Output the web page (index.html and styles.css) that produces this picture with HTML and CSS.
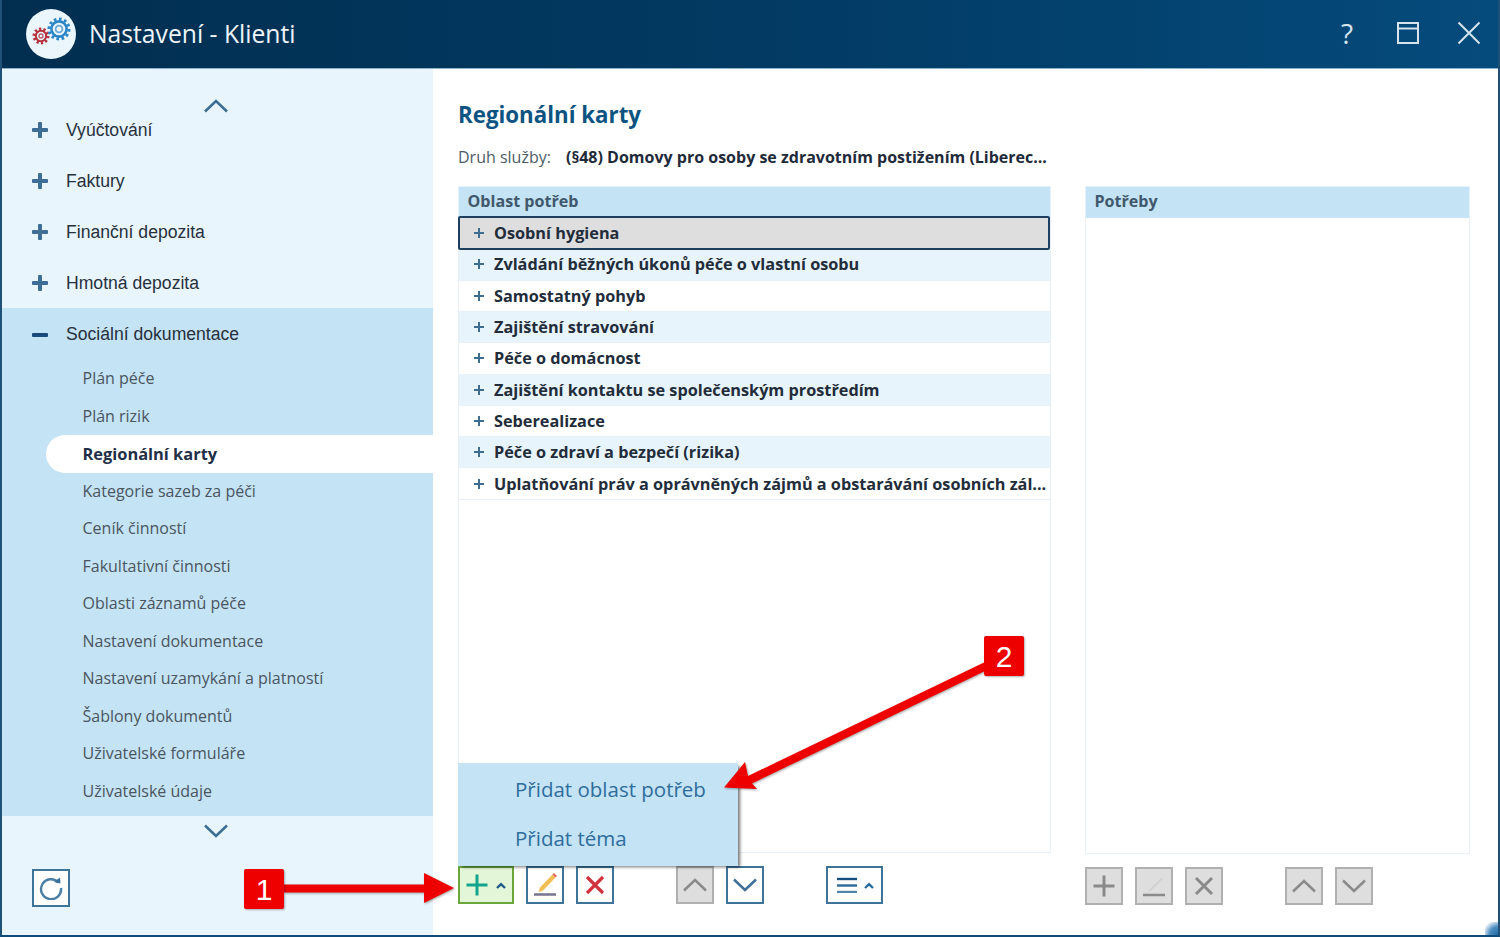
FILE: index.html
```html
<!DOCTYPE html>
<html lang="cs">
<head>
<meta charset="utf-8">
<title>Nastavení - Klienti</title>
<link rel="stylesheet" href="styles.css">
</head>
<body>
<div class="window">
  <header class="titlebar">
    <div class="logo">
      <svg width="50" height="50" viewBox="0 0 50 50">
        <g fill="none" stroke="#b5323f">
          <circle cx="15" cy="27" r="7" stroke-width="3" stroke-dasharray="2.2 2.2"/>
          <circle cx="15" cy="27" r="5.2" stroke-width="2"/>
          <circle cx="15" cy="27" r="2" stroke-width="1.4" stroke="#c0606c"/>
        </g>
        <g fill="none" stroke="#2a86c8">
          <circle cx="33" cy="20" r="10" stroke-width="3" stroke-dasharray="2.6 2.6"/>
          <circle cx="33" cy="20" r="7.6" stroke-width="2.6"/>
          <circle cx="33" cy="20" r="3.4" stroke-width="1.8" stroke="#6aa9d8"/>
        </g>
      </svg>
    </div>
    <h1 class="app-title">Nastavení - Klienti</h1>
    <div class="win-controls">
      <span class="win-help">?</span>
      <svg class="win-ico" width="24" height="24" viewBox="0 0 24 24" fill="none" stroke="#d5e4ee" stroke-width="2"><rect x="2" y="2" width="20" height="20"/><path d="M2 7.5h20"/></svg>
      <svg class="win-ico" width="24" height="24" viewBox="0 0 24 24" fill="none" stroke="#d5e4ee" stroke-width="2"><path d="M1.500 1.500l21 21M22.500 1.500l-21 21"/></svg>
    </div>
  </header>
  <div class="content">
    <aside class="sidebar">
      <div class="scroll-up">
        <svg width="26" height="14" viewBox="0 0 26 14" fill="none" stroke="#3e6d96" stroke-width="2.6"><path d="M2 12.5L13 2l11 10.5"/></svg>
      </div>
      <nav class="nav">
        <div class="nav-item"><span class="sign plus"></span>Vyúčtování</div>
        <div class="nav-item"><span class="sign plus"></span>Faktury</div>
        <div class="nav-item"><span class="sign plus"></span>Finanční depozita</div>
        <div class="nav-item"><span class="sign plus"></span>Hmotná depozita</div>
        <div class="nav-section">
          <div class="nav-item"><span class="sign minus"></span>Sociální dokumentace</div>
          <ul class="sub">
            <li>Plán péče</li>
            <li>Plán rizik</li>
            <li class="active">Regionální karty</li>
            <li>Kategorie sazeb za péči</li>
            <li>Ceník činností</li>
            <li>Fakultativní činnosti</li>
            <li>Oblasti záznamů péče</li>
            <li>Nastavení dokumentace</li>
            <li>Nastavení uzamykání a platností</li>
            <li>Šablony dokumentů</li>
            <li>Uživatelské formuláře</li>
            <li>Uživatelské údaje</li>
          </ul>
        </div>
      </nav>
      <div class="scroll-down">
        <svg width="26" height="14" viewBox="0 0 26 14" fill="none" stroke="#3e6d96" stroke-width="2.6"><path d="M2 1.5L13 12 24 1.5"/></svg>
      </div>
      <div class="side-foot">
        <button class="btn">
          <svg width="24" height="24" viewBox="0 0 24 24" fill="none" stroke="#4a7fa6" stroke-width="2.400"><path d="M19.500 6.500A10 10 0 1 0 22 12"/><path d="M15 6l6.500 1.500L21 1.500z" fill="#3a6f98" stroke="none"/></svg>
        </button>
      </div>
    </aside>
    <main class="main">
      <h2 class="page-title">Regionální karty</h2>
      <div class="service"><span class="service-label">Druh služby:</span><strong>(§48) Domovy pro osoby se zdravotním postižením (Liberec...</strong></div>
      <div class="columns">
        <section class="col col-left">
          <div class="panel">
            <div class="panel-head">Oblast potřeb</div>
            <div class="row selected"><span class="row-plus"></span><span class="row-text">Osobní hygiena</span></div>
            <div class="row"><span class="row-plus"></span><span class="row-text">Zvládání běžných úkonů péče o vlastní osobu</span></div>
            <div class="row"><span class="row-plus"></span><span class="row-text">Samostatný pohyb</span></div>
            <div class="row"><span class="row-plus"></span><span class="row-text">Zajištění stravování</span></div>
            <div class="row"><span class="row-plus"></span><span class="row-text">Péče o domácnost</span></div>
            <div class="row"><span class="row-plus"></span><span class="row-text">Zajištění kontaktu se společenským prostředím</span></div>
            <div class="row"><span class="row-plus"></span><span class="row-text">Seberealizace</span></div>
            <div class="row"><span class="row-plus"></span><span class="row-text">Péče o zdraví a bezpečí (rizika)</span></div>
            <div class="row"><span class="row-plus"></span><span class="row-text">Uplatňování práv a oprávněných zájmů a obstarávání osobních zál...</span></div>
          </div>
          <div class="toolbar">
            <div class="menu">
              <div class="menu-item">Přidat oblast potřeb</div>
              <div class="menu-item">Přidat téma</div>
            </div>
            <button class="btn btn-add">
              <svg width="22" height="22" viewBox="0 0 22 22" fill="none" stroke="#10a58c" stroke-width="3"><path d="M11 .5v21M.5 11h21"/></svg>
              <svg class="caret" width="10" height="7" viewBox="0 0 10 7" fill="none" stroke="#1f5a88" stroke-width="2.400"><path d="M1 6l4-3.800L9 6"/></svg>
            </button>
            <button class="btn">
              <svg width="28" height="28" viewBox="0 0 28 28" fill="none"><path d="M7.500 21l1.500-4.500L21.500 3.500l3 3L12 19.500z" fill="#f2bd52"/><path d="M21.500 3.500L23 2l3 3-1.500 1.500z" fill="#e2625c"/><path d="M3 23.500h22" stroke="#77748f" stroke-width="2.500"/></svg>
            </button>
            <button class="btn">
              <svg width="22" height="22" viewBox="0 0 22 22" fill="none" stroke="#d2343f" stroke-width="3.200"><path d="M3 3l16 16M19 3L3 19"/></svg>
            </button>
            <button class="btn btn-off gap-move">
              <svg width="26" height="14" viewBox="0 0 26 14" fill="none" stroke="#8a8a8a" stroke-width="2.500"><path d="M2 12.500L13 2l11 10.500"/></svg>
            </button>
            <button class="btn">
              <svg width="26" height="14" viewBox="0 0 26 14" fill="none" stroke="#3d6f99" stroke-width="2.500"><path d="M2 1.500L13 12 24 1.500"/></svg>
            </button>
            <button class="btn btn-wide gap-move">
              <svg width="22" height="16" viewBox="0 0 22 16" fill="none" stroke="#2a6a9a" stroke-width="2.400"><path d="M1 2h20" stroke="#154f80"/><path d="M1 8.500h20"/><path d="M1 15h20" stroke="#4f83ab"/></svg>
              <svg class="caret" width="10" height="7" viewBox="0 0 10 7" fill="none" stroke="#2a6a9a" stroke-width="2.400"><path d="M1 6l4-3.800L9 6"/></svg>
            </button>
          </div>
        </section>
        <section class="col col-right">
          <div class="panel">
            <div class="panel-head">Potřeby</div>
          </div>
          <div class="toolbar">
            <button class="btn btn-off">
              <svg width="24" height="24" viewBox="0 0 24 24" fill="none" stroke="#8a8a8a" stroke-width="3"><path d="M12 1.500v21M1.500 12h21"/></svg>
            </button>
            <button class="btn btn-off">
              <svg width="26" height="26" viewBox="0 0 26 26" fill="none"><path d="M7.500 17.500L20.500 5l1 1L9 18.500z" fill="#cfcfcf"/><path d="M2 22h22" stroke="#8a8a8a" stroke-width="2.500"/></svg>
            </button>
            <button class="btn btn-off">
              <svg width="22" height="22" viewBox="0 0 22 22" fill="none" stroke="#8a8a8a" stroke-width="3"><path d="M3 3l16 16M19 3L3 19"/></svg>
            </button>
            <button class="btn btn-off gap-move">
              <svg width="26" height="14" viewBox="0 0 26 14" fill="none" stroke="#8a8a8a" stroke-width="2.500"><path d="M2 12.500L13 2l11 10.500"/></svg>
            </button>
            <button class="btn btn-off">
              <svg width="26" height="14" viewBox="0 0 26 14" fill="none" stroke="#8a8a8a" stroke-width="2.500"><path d="M2 1.500L13 12 24 1.500"/></svg>
            </button>
          </div>
        </section>
      </div>
    </main>
  </div>
  <div class="corner"></div>
  <svg class="arrows" width="1500" height="937" viewBox="0 0 1500 937">
    <g class="arrow-shapes" fill="#ee0000">
      <path d="M284 884.500H424V873L454 888 424 903V892.500H284z"/>
      <path d="M985 662L748 776 745 762 724 787.500 757 789 752 783.500 985 671z"/>
    </g>
  </svg>
  <div class="badge badge-1">1</div>
  <div class="badge badge-2">2</div>
</div>
</body>
</html>
```

FILE: styles.css
```css
* { box-sizing: border-box; }
html, body { margin: 0; padding: 0; }
body { font-family: "Open Sans", "Liberation Sans", sans-serif; color: #222c3a; background: #fff; }

.window {
  position: relative;
  width: 1500px;
  height: 937px;
  display: flex;
  flex-direction: column;
  overflow: hidden;
  border-left: 2px solid #1f5078;
  border-right: 2px solid #1f5078;
  border-bottom: 2px solid #0f4a78;
  background: #fff;
}

.titlebar {
  height: 69px;
  margin: 0 -2px;
  flex: none;
  display: flex;
  align-items: center;
  padding: 0 19.500px 1px 26px;
  background: linear-gradient(90deg, #012e4f 0%, #023a63 50%, #054b7c 100%);
  border-bottom: 1px solid #8db2ca;
}
.logo {
  width: 50px;
  height: 50px;
  border-radius: 50%;
  background: #eaf5fc;
  flex: none;
}
.logo svg { display: block; }
.app-title {
  margin: 0 0 0 13px;
  font-size: 24.700px;
  font-weight: 400;
  line-height: 32px;
  color: #eef5fa;
}
.win-controls {
  margin-left: auto;
  margin-bottom: 2px;
  display: flex;
  align-items: center;
  gap: 37px;
}
.win-help { font-size: 28px; line-height: 32px; color: #d5e4ee; width: 16px; margin-right: 3.500px; text-align: center; }
.win-ico { display: block; }

.content { flex: 1; min-height: 0; display: flex; }

.sidebar {
  width: 431px;
  flex: none;
  background: #e9f5fc;
  display: flex;
  flex-direction: column;
}
.scroll-up { height: 35px; padding-right: 3px; }
.scroll-up svg { display: block; margin: 30px auto 0; }
.nav { font-family: "Liberation Sans", Arial, sans-serif; }
.nav-item {
  height: 51px;
  display: flex;
  align-items: center;
  padding: 1px 0 0 30px;
  font-size: 17.600px;
  color: #27303c;
}
.nav-section .nav-item { height: 52px; }
.sign { position: relative; width: 16px; height: 16px; margin-right: 18px; flex: none; }
.sign::before, .plus::after {
  content: "";
  position: absolute;
  background: #3e6d96;
}
.sign::before { left: 0; right: 0; top: 6px; height: 4px; border-radius: 1px; }
.plus::after { top: 0; bottom: 0; left: 6px; width: 4px; border-radius: 1px; }
.minus::before { background: #1a4a7a; }
.nav-section { background: #c4e3f5; padding-bottom: 6px; }
.sub {
  list-style: none;
  margin: 0;
  padding: 0 0 0 44px;
  font-family: "Open Sans", sans-serif;
  font-size: 16px;
  color: #4a5560;
}
.sub li {
  height: 37.500px;
  line-height: 37.500px;
  padding-left: 36.500px;
  border-radius: 19px 0 0 19px;
}
.sub .active { background: #fff; font-size: 16.400px; font-weight: 700; color: #1f2f47; }
.scroll-down { height: 53px; padding-right: 3px; }
.scroll-down svg { display: block; margin: 8px auto 0; }
.side-foot { padding-left: 30px; }

.btn {
  width: 38px;
  height: 38px;
  flex: none;
  padding: 0;
  display: flex;
  align-items: center;
  justify-content: center;
  background: #fff;
  border: 2px solid #3f7499;
}
.btn-add { width: 56px; background: #e4f6d8; border-color: #6aa63c; gap: 8px; padding-right: 1px; }
.btn-wide { width: 57px; gap: 6px; }
.btn-off { background: #dedede; border-color: #b0b0b0; }
.caret { flex: none; }

.main { flex: 1; min-width: 0; padding: 28px 28px 0 25px; display: flex; flex-direction: column; }
.page-title {
  margin: 0;
  font-size: 22.300px;
  line-height: 36px;
  font-weight: 700;
  color: #0e5482;
}
.service {
  margin-top: 12px;
  height: 24px;
  line-height: 24px;
  font-size: 16px;
  display: flex;
  white-space: nowrap;
}
.service-label { color: #4d5b68; width: 108px; flex: none; }
.service strong { font-weight: 700; color: #1f2a3a; }

.columns { margin-top: 17px; display: flex; gap: 34px; }
.col { display: flex; flex-direction: column; }
.col-left { width: 593px; }
.col-right { width: 385px; }
.panel { border: 1px solid #e8f0fa; height: 667px; }
.col-right .panel { height: 668px; }
.panel-head {
  height: 31px;
  line-height: 29px;
  padding-left: 8.500px;
  margin: 0;
  background: #c4e3f5;
  font-size: 16.100px;
  font-weight: 700;
  color: #41586c;
}
.row {
  height: 31.300px;
  display: flex;
  align-items: center;
  padding: 0 3px 0 15px;
  font-size: 16.250px;
  font-weight: 700;
  color: #222c3a;
  border-bottom: 1px solid #e8f0fa;
}
.row:nth-child(odd) { background: #e8f4fb; }
.row.selected {
  height: 34px;
  margin: -2px 0 -.700px -1px;
  padding-left: 14px;
  position: relative;
  background: #dedede;
  border: 2px solid #1f3f5f;
  border-radius: 2px;
}
.row-plus { position: relative; width: 10px; height: 10px; margin-right: 10px; flex: none; }
.row-plus::before, .row-plus::after { content: ""; position: absolute; background: #3f6d90; }
.row-plus::before { left: 0; right: 0; top: 4px; height: 2px; }
.row-plus::after { top: 0; bottom: 0; left: 4px; width: 2px; }
.row-text { white-space: nowrap; overflow: hidden; }

.toolbar { position: relative; margin-top: 13px; display: flex; gap: 12px; }
.gap-move { margin-left: 50px; }
.menu {
  position: absolute;
  left: 0;
  bottom: 100%;
  width: 280px;
  height: 103px;
  padding-top: 2px;
  background: #c4e3f5;
  box-shadow: 3px 2px 3px -1px rgba(0, 0, 0, .55);
}
.menu-item {
  height: 49px;
  line-height: 49px;
  padding-left: 57px;
  font-size: 20.500px;
  color: #2f6d9c;
}

.corner {
  position: absolute;
  right: 0;
  bottom: 0;
  width: 13px;
  height: 13px;
  background: radial-gradient(circle at 100% 100%, #1f6aa8 0, #4a8cc0 45%, rgba(255, 255, 255, 0) 85%);
}
.arrows { position: absolute; left: -2px; top: 0; pointer-events: none; }
.arrow-shapes { filter: drop-shadow(1px 1px 1px rgba(0, 0, 0, .35)); }
.badge {
  position: absolute;
  width: 40px;
  height: 40px;
  background: #ee0000;
  border-radius: 2px;
  color: #fff;
  font-family: "Liberation Sans", Arial, sans-serif;
  font-size: 30px;
  line-height: 42px;
  text-align: center;
  box-shadow: 1px 1px 2px rgba(0, 0, 0, .3);
}
.badge-1 { left: 242px; top: 869px; }
.badge-2 { left: 982px; top: 636px; }
```
